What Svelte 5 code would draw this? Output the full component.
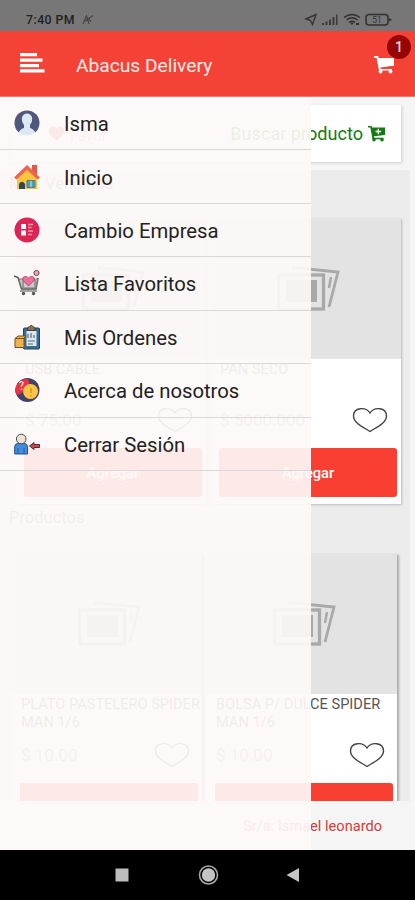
<script lang="ts">
	interface Product {
		name: string;
		price: string;
	}

	let drawerOpen = $state(true);
	let cartCount = $state(1);

	const menu = [
		{ icon: "user", label: "Isma" },
		{ icon: "home", label: "Inicio" },
		{ icon: "company", label: "Cambio Empresa" },
		{ icon: "favorites", label: "Lista Favoritos" },
		{ icon: "orders", label: "Mis Ordenes" },
		{ icon: "about", label: "Acerca de nosotros" },
		{ icon: "logout", label: "Cerrar Sesión" }
	];

	const bestSellers: Product[] = [
		{ name: "USB CABLE", price: "$ 75.00" },
		{ name: "PAN SECO", price: "$ 5000.000" }
	];

	const products: Product[] = [
		{ name: "PLATO PASTELERO SPIDER MAN 1/6", price: "$ 10.00" },
		{ name: "BOLSA P/ DULCE SPIDER MAN 1/6", price: "$ 10.00" }
	];
</script>

{#snippet card(product: Product)}
	<article class="card">
		<div class="photo">
			<svg width="64" height="48" viewBox="0 0 64 48" fill="none" stroke="#a9a9a9">
				<path d="M16 5 17 2.500 61 7 52 42" stroke-width="2.800" />
				<path d="M54 12 52 23" stroke-width="2.500" />
				<rect x="1.500" y="10" width="45" height="34" stroke-width="3.300" />
				<rect x="9" y="15" width="31" height="22" fill="#a9a9a9" stroke="none" />
			</svg>
		</div>
		<h3>{product.name}</h3>
		<div class="price-row">
			<span>{product.price}</span>
			<svg width="36" height="26" viewBox="0 0 36 26" fill="none" stroke="#444" stroke-width="1.400">
				<path d="M18 24.500C13 21 1.500 16.500 1.500 9 1.500 0 14 -.5 18 6 22 -.5 34.500 0 34.500 9 34.500 16.500 23 21 18 24.500Z" />
			</svg>
		</div>
		<button class="add">Agregar</button>
	</article>
{/snippet}

<div class="phone">
	<div class="status">
		<span class="time">7:40 PM</span>
		<svg class="mark" width="13" height="12" viewBox="0 0 13 12" fill="none" stroke="#444" stroke-width="1.200">
			<path d="M1 10 4.500 2 7 10M3 7 11 1.500M7 5 9 8" />
		</svg>
		<svg class="signals" width="88" height="16" viewBox="0 0 88 16">
			<path d="M2 7 12 2.500 8.500 12.500 6.500 8.500Z" fill="none" stroke="#333" stroke-width="1.400" />
			<path d="M18 11h2v2h-2zM21.500 9.500h2V13h-2zM25 7.500h2V13h-2zM28.500 5h2v8h-2zM32 2.500h1.500V13H32z" fill="#3c3c3c" />
			<g fill="none" stroke="#303030" stroke-width="1.500">
				<path d="M40 5.500Q48 -.5 56 5.500M42.500 8Q48 3.500 53.500 8M45 10.500Q48 8 51 10.500" />
				<rect x="62" y="2.500" width="22" height="10.500" rx="3" />
			</g>
			<path d="M46 10.500 48 13 50 10.500ZM52 11h3v2h-3zM85 6 88 7.700 85 9.500Z" fill="#303030" />
			<text x="73" y="11" text-anchor="middle">51</text>
		</svg>
	</div>

	<header>
		<button class="plain" aria-label="Menu" onclick={() => (drawerOpen = !drawerOpen)}>
			<svg width="25" height="20" viewBox="0 0 25 20" fill="#fff">
				<path d="M0 0h17v3.300H0zM0 5.500h22.500v3.300H0zM0 11h19v3.300H0zM0 16.300h24.500v3.300H0z" />
			</svg>
		</button>
		<h1>Abacus Delivery</h1>
		<div class="cart">
			<svg width="20" height="18" viewBox="0 0 20 18" fill="#fff">
				<path d="M0 0h4l.7 2H20v7.500L6.500 11.500 6.800 13H18v1.500H5L2.500 1.800H0z" />
				<path d="M4.500 2H19.500V9.500L6 11Z" />
				<circle cx="6.500" cy="15.500" r="1.900" />
				<circle cx="16.500" cy="15.500" r="1.900" />
			</svg>
			<span class="badge">{cartCount}</span>
		</div>
	</header>

	<main>
		<div class="search">
			<span class="favs">
				<svg width="17" height="15" viewBox="0 0 17 15" fill="#e53935">
					<path d="M8.500 15 1.500 8C-2 3.500 4.500-2.500 8.500 2.300 12.500-2.500 19 3.500 15.500 8Z" />
				</svg>
				<em>Favor.</em>
			</span>
			<span class="find">
				Buscar producto
				<svg width="17" height="16" viewBox="0 0 17 16" fill="#147a14">
					<path d="M0 0h3.600l.5 1.500H17V9L6 10.300 6.300 11.800H15.500v1.500H4.500L2.300 1.600H0z" />
					<circle cx="6" cy="13.700" r="1.800" />
					<circle cx="14" cy="13.700" r="1.800" />
					<path d="M10.300 2.800v5.400M7.600 5.500H13" stroke="#fff" stroke-width="1.300" />
				</svg>
			</span>
		</div>

		<div class="feed">
			<h2>Mas Vendidos</h2>
			<div class="row first">
				{#each bestSellers as product}
					{@render card(product)}
				{/each}
			</div>
			<h2>Productos</h2>
			<div class="row second">
				{#each products as product}
					{@render card(product)}
				{/each}
			</div>
		</div>

		<footer>Sr/a: Ismael leonardo</footer>

		{#if drawerOpen}
			<nav>
				{#each menu as item}
					<a href="#{item.icon}">
						<svg width="26" height="26" viewBox="0 0 26 26">
							{#if item.icon === "user"}
								<path d="M5 22.500A12.500 12.500 0 1 1 21 22.500Z" fill="#50577c" />
								<path d="M4.500 22.500Q7 18.500 10 18V15Q7.500 12 7.800 8 9 3.500 13 3.500T18.200 8Q18.500 12 16 15V18Q19 18.500 21.500 22.500 17 25.500 13 25.500T4.500 22.500Z" fill="#dbe9f2" />
							{:else if item.icon === "home"}
								<path d="M18 1h5v11h-5z" fill="#e2574c" />
								<path d="M3 13 13 4 23 13V25H3Z" fill="#fbc63d" />
								<path d="M13 1 26 13.500 23.500 15.500 13 6 2.500 15.500 0 13.500Z" fill="#ef6350" />
								<path d="M5 25v-5q3-4.500 6 0v5z" fill="#29485a" />
								<path d="M13 16.500h8v7h-8z" fill="#3ea4bd" stroke="#68727a" />
								<path d="M17 17v6" stroke="#d5e6d5" />
							{:else if item.icon === "company"}
								<circle cx="13" cy="13" r="12.500" fill="#dc2455" />
								<path d="M7 7h5v5H7zM7 13.500h5v5H7z" fill="#fff" />
								<path d="M14 7.500h5M14 10.500h3.500M14 14h5M14 17.500h4" stroke="#f595ab" stroke-width="1.500" />
							{:else if item.icon === "favorites"}
								<path d="M0 6 4 7.500 7.500 19H22L24 8" fill="none" stroke="#555" stroke-width="1.500" />
								<path d="M5 9H23.500L22 18H7.500Z" fill="#ccc" stroke="#777" />
								<path d="M6 21H23M9 10v8M21 10v8" stroke="#888" stroke-width="1.500" />
								<path d="M14.500 16 9 10.500C7.500 6.500 12 5 14.500 8 17 5 21.500 6.500 20 10.500Z" fill="#ee6e9c" stroke="#9a3f61" stroke-width=".8" />
								<circle cx="9.500" cy="23.500" r="1.700" fill="#555" />
								<circle cx="19.500" cy="23.500" r="1.700" fill="#555" />
								<circle cx="22.500" cy="3" r="2.600" fill="#f0a2bd" stroke="#6e4753" />
							{:else if item.icon === "orders"}
								<rect x="9.500" y="4" width="16" height="21" rx="1" fill="#376b91" stroke="#294258" />
								<path d="M12.500 7h10v15h-10z" fill="#dce8ee" />
								<path d="M13.500 4.500q0-1.500 2-2 1.700-2.500 3.500 0 2 .5 2 2v2h-7.500z" fill="#8a714f" stroke="#333" stroke-width=".8" />
								<path d="M14 10v4M17 9v5M20 11v3M14 17h7M14 20h5" stroke="#566b78" stroke-width="1.200" />
								<path d="M1 14.500 4 12h8l-2 2.500v9H1Z" fill="#efb24b" stroke="#735027" />
								<path d="M1 14.500h9M10 14.500 12 12" stroke="#735027" />
							{:else if item.icon === "about"}
								<circle cx="13.500" cy="13" r="12" fill="#414266" />
								<path d="M1 14A12 12 0 0 1 14 2Q17 7 12 12T3 18Q1 16 1 14Z" fill="#e93443" />
								<circle cx="16.500" cy="14.500" r="7.500" fill="#fcc644" />
								<path d="M5.500 6Q7 3.500 9 5.500 9.500 7 7.500 8.500V10M7.500 11.500V13" fill="none" stroke="#ffd7cf" stroke-width="1.400" />
								<path d="M17 11v5M17 18v1.500" stroke="#df922e" stroke-width="1.500" />
							{:else}
								<path d="M.7 23V16Q.7 12.500 4 12.500H10Q13.500 12.500 13.500 16V23Z" fill="#3f8de0" stroke="#28527e" />
								<path d="M4 17v6M10 17v6" stroke="#28527e" stroke-width=".8" />
								<circle cx="7.200" cy="8" r="4.800" fill="#f0e3cf" stroke="#44505e" />
								<path d="M15.500 15 20 11.500V13.500H25.500V16.500H20V18.500Z" fill="#dc4150" stroke="#46323a" />
							{/if}
						</svg>
						<span>{item.label}</span>
					</a>
				{/each}
			</nav>
		{/if}
	</main>

	<div class="system-bar">
		<svg width="190" height="22" viewBox="0 0 190 22">
			<rect x="2.500" y="4.500" width="13" height="13" fill="#bdbdbd" />
			<circle cx="95.500" cy="11" r="9" fill="none" stroke="#a8a8a8" stroke-width="1.600" />
			<circle cx="95.500" cy="11" r="6.700" fill="#c4c4c4" />
			<path d="M173.500 11 186 4V18Z" fill="#c4c4c4" />
		</svg>
	</div>
</div>

<style>
	:global(body) {
		margin: 0;
	}

	.phone {
		display: flex;
		flex-direction: column;
		width: 415px;
		height: 900px;
		overflow: hidden;
		font-family: Roboto, "Liberation Sans", sans-serif;
		color: #222;
	}

	.status {
		box-sizing: border-box;
		display: flex;
		align-items: center;
		height: 31px;
		padding: 8px 23px 0 26px;
		background: #777;

		.time {
			font-size: 12.3px;
			font-weight: 500;
			letter-spacing: 0.45px;
		}

		.mark {
			margin-left: 7px;
		}

		.signals {
			margin-left: auto;
		}

		text {
			font-size: 8.5px;
			fill: #333;
		}
	}

	header {
		box-sizing: border-box;
		display: flex;
		align-items: center;
		height: 66px;
		padding: 2px 21px 0 20px;
		background: #f44336;
		border-bottom: 1px solid #e57d76;

		h1 {
			margin: 2px 0 0 31px;
			font-size: 19.2px;
			font-weight: 400;
			color: #ffe9e6;
		}
	}

	.plain {
		display: flex;
		padding: 0;
		margin-bottom: 3px;
		border: none;
		background: none;
	}

	.cart {
		position: relative;
		display: flex;
		margin-left: auto;

		.badge {
			position: absolute;
			top: -21px;
			right: -17px;
			width: 24px;
			height: 24px;
			border-radius: 50%;
			background: #960606;
			color: #f5dede;
			font-size: 14px;
			font-weight: 500;
			line-height: 25px;
			text-align: center;
		}
	}

	main {
		position: relative;
		display: flex;
		flex-direction: column;
		height: 753px;
		background: #f5f5f5;
	}

	.search {
		display: flex;
		align-items: center;
		justify-content: space-between;
		height: 57px;
		margin: 8px 14px 8px 10px;
		padding: 0 16px 0 38px;
		box-sizing: border-box;
		background: #fff;
		box-shadow: 1px 1px 3px #ccc;

		span {
			display: flex;
			align-items: center;
			gap: 5px;
		}

		em {
			margin-top: 4px;
			font-style: normal;
			font-size: 15px;
			color: #aaa;
		}
	}

	.find {
		font-size: 18.1px;
		color: #147a14;
	}

	.feed {
		height: 631px;
		margin: 0 5px 0 0;
		overflow: hidden;
		background: #ececec;
	}

	h2 {
		height: 48px;
		margin: 0;
		padding: 4px 0 0 9px;
		box-sizing: border-box;
		font-size: 16.5px;
		font-weight: 400;
		color: #777;
	}

	.row {
		display: flex;
		gap: 5px;
	}

	.first {
		padding-left: 16px;
	}

	.second {
		padding-left: 12px;
	}

	.card {
		flex: none;
		width: 190px;
		height: 286px;
		background: #fff;
		box-shadow: 1px 1px 2px #bbb;

		h3 {
			height: 40px;
			margin: 0;
			padding: 1px 0 0 9px;
			box-sizing: border-box;
			font-size: 14.6px;
			font-weight: 400;
			line-height: 18px;
			color: #555;
		}
	}

	.photo {
		display: flex;
		align-items: center;
		justify-content: center;
		height: 141px;
		background: #e3e3e3;

		svg {
			margin-left: 5px;
		}
	}

	.price-row {
		display: flex;
		align-items: center;
		justify-content: space-between;
		height: 41px;
		padding: 0 13px 0 9px;
		font-size: 17px;
		color: #888;
	}

	.add {
		display: block;
		width: 178px;
		height: 49px;
		margin: 8px 0 0 8px;
		border: none;
		border-radius: 3px;
		background: #f93e32;
		color: #fff;
		font: 500 14.7px Roboto, sans-serif;
	}

	.first + h2 {
		height: 49px;
	}

	.second .card {
		height: 300px;
		box-shadow: 2px 2px 2px #aaa;

		.price-row {
			padding-right: 12px;
		}
	}

	footer {
		padding: 16px 33px 0 0;
		font-size: 14.6px;
		text-align: right;
		color: #d0403b;
	}

	nav {
		position: absolute;
		top: 0;
		left: 0;
		bottom: 0;
		width: 311px;
		background: rgba(253, 248, 247, 0.92);

		a {
			display: flex;
			align-items: center;
			gap: 24px;
			height: 53.43px;
			box-sizing: border-box;
			padding-left: 14px;
			border-bottom: 1.5px solid #dcd8d7;
			color: #222;
			font-size: 20.3px;
			text-decoration: none;
		}

		span {
			padding-top: 2px;
		}
	}

	.system-bar {
		display: flex;
		align-items: center;
		justify-content: center;
		height: 50px;
		background: #000;
	}
</style>
